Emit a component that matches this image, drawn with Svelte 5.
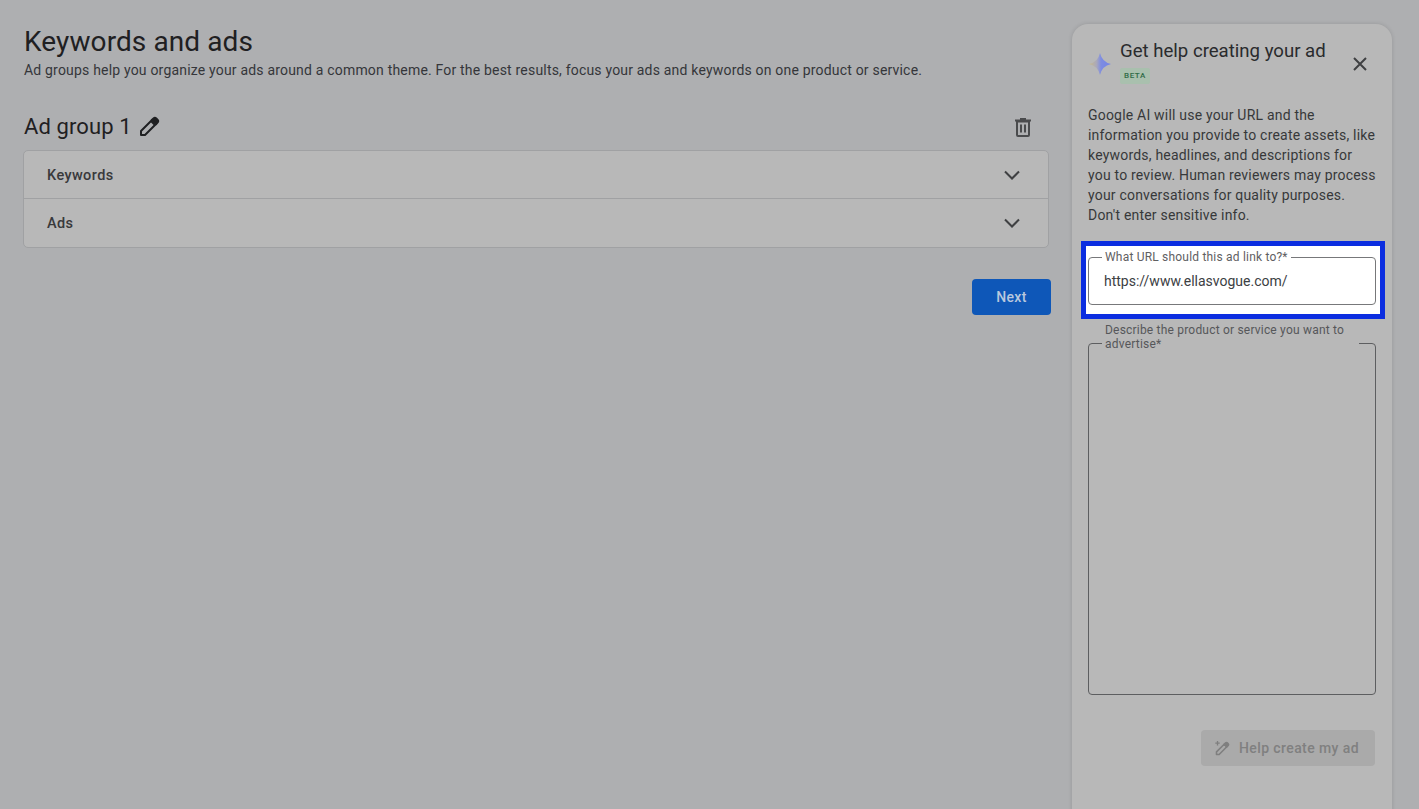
<script lang="ts">
  let url = 'https://www.ellasvogue.com/';
  let sections = ['Keywords', 'Ads'];
</script>

<div class="page">
  <main class="content">
    <h1>Keywords and ads</h1>
    <p class="lead">Ad groups help you organize your ads around a common theme. For the best results, focus your ads and keywords on one product or service.</p>

    <div class="group-head">
      <h2>Ad group 1</h2>
      <svg class="pencil" viewBox="0 0 24 24" width="24" height="24" fill="none" stroke="#1f2022" stroke-width="2">
        <path d="M4 20v-4L15.5 4.5l4 4L8 20z" stroke-linejoin="round" />
        <path d="M14 6l4 4" />
        <path d="M16.5 3.5a2 2 0 0 1 2.8 0l1.2 1.2a2 2 0 0 1 0 2.8L19 9l-4-4z" fill="#1f2022" />
      </svg>
      <svg class="trash" viewBox="0 0 24 24" width="24" height="24" fill="none" stroke="#4a4b4d" stroke-width="2">
        <path d="M6 6.5h12V20a1 1 0 0 1-1 1H7a1 1 0 0 1-1-1z" />
        <path d="M4 5.5h16M9 4h6" />
        <path d="M10 9.5v8M14 9.5v8" />
      </svg>
    </div>

    <div class="accordion">
      {#each sections as name}
        <div class="row">
          <span>{name}</span>
          <svg viewBox="0 0 24 24" width="24" height="24" fill="none" stroke="#3f4042" stroke-width="2">
            <path d="M5 8.5l7 7 7-7" />
          </svg>
        </div>
      {/each}
    </div>

    <div class="actions">
      <button class="next">Next</button>
    </div>
  </main>

  <aside class="panel">
    <header class="panel-head">
      <svg class="spark" viewBox="0 0 24 24" width="24" height="24">
        <defs>
          <linearGradient id="spark-fill" x1="0" y1="0" x2="1" y2="0">
            <stop offset="0" stop-color="#c8b98c" />
            <stop offset="0.35" stop-color="#a9a8bc" />
            <stop offset="0.55" stop-color="#7d8ce2" />
            <stop offset="1" stop-color="#7484e6" />
          </linearGradient>
        </defs>
        <path d="M12 1Q14 10 23 12Q14 14 12 23Q10 14 1 12Q10 10 12 1z" fill="url(#spark-fill)" />
      </svg>
      <div class="panel-title">
        <h3>Get help creating your ad</h3>
        <span class="beta">BETA</span>
      </div>
      <svg class="close" viewBox="0 0 24 24" width="24" height="24" fill="none" stroke="#3f4042" stroke-width="2">
        <path d="M6 6l12 12M18 6L6 18" />
      </svg>
    </header>

    <p class="intro">Google AI will use your URL and the information you provide to create assets, like keywords, headlines, and descriptions for you to review. Human reviewers may process your conversations for quality purposes. Don't enter sensitive info.</p>

    <div class="highlight">
      <fieldset class="field url">
        <legend>What URL should this ad link to?*</legend>
        <div class="value">{url}</div>
      </fieldset>
    </div>

    <fieldset class="field describe">
      <legend>Describe the product or service you want to advertise*</legend>
    </fieldset>

    <div class="panel-actions">
      <button class="help" disabled>
        <svg viewBox="0 0 18 18" width="18" height="18" fill="none" stroke="#7f7f7f" stroke-width="1.6">
          <path d="M3.5 15.5v-2.6l7.7-7.7 2.6 2.6-7.7 7.7z" stroke-linejoin="round" />
          <path d="M11.2 5.2l1.4-1.4a1.2 1.2 0 0 1 1.7 0l.9.9a1.2 1.2 0 0 1 0 1.7l-1.4 1.4z" fill="#7f7f7f" />
          <path d="M4.5 2v4.4M2.3 4.2h4.4" stroke-width="1.3" />
        </svg>
        Help create my ad
      </button>
    </div>
  </aside>
</div>

<style>
  :global(body) {
    margin: 0;
    background: #aeafb1;
    font-family: Roboto, "Liberation Sans", sans-serif;
    overflow: hidden;
  }

  .page {
    display: flex;
    height: 809px;
    overflow: hidden;
  }

  .content {
    width: 1026px;
    padding: 24px 0 0 23px;
    flex: none;
  }

  h1 {
    margin: 0 0 1px 1px;
    font-size: 28px;
    line-height: 35px;
    font-weight: 400;
    letter-spacing: 0.1px;
    color: #1f2022;
  }

  .lead {
    margin: 0 0 0 1px;
    font-size: 14px;
    line-height: 20px;
    letter-spacing: 0.19px;
    color: #35363a;
    white-space: nowrap;
  }

  .group-head {
    display: flex;
    align-items: center;
    margin-top: 33px;
    height: 27px;
    gap: 5px;
  }

  h2 {
    margin: 0 0 0 1px;
    font-size: 22px;
    font-weight: 400;
    line-height: 27px;
    letter-spacing: 0.1px;
    color: #1f2022;
  }

  .trash { margin-left: auto; margin-right: 14px; }

  .accordion {
    margin-top: 10px;
    background: #b8b8b8;
    border: 1px solid #a0a1a3;
    border-radius: 5px;
  }

  .row {
    display: flex;
    align-items: center;
    justify-content: space-between;
    height: 47px;
    padding: 0 24px 0 23px;
    font-size: 14.5px;
    font-weight: 500;
    letter-spacing: 0.4px;
    color: #38393b;
  }

  .row:first-child span { padding-top: 2px; }

  .row + .row { border-top: 1px solid #a0a1a3; height: 48px; }

  .actions {
    display: flex;
    justify-content: flex-end;
    margin: 31px -2px 0 0;
  }

  .next {
    width: 79px;
    height: 36px;
    border: none;
    border-radius: 4px;
    background: #0e57b8;
    color: #b9c8de;
    font: 500 14px Roboto, sans-serif;
    letter-spacing: 0.3px;
  }

  .panel {
    margin: 24px 0 0 23px;
    width: 320px;
    height: 800px;
    flex: none;
    box-sizing: border-box;
    padding: 15px 16px 0;
    background: #b8b8b8;
    border-radius: 16px 16px 0 0;
    box-shadow: 0 0 4px rgba(0, 0, 0, 0.14);
  }

  .panel-head {
    display: flex;
    align-items: flex-start;
  }

  .spark { margin: 13px 8px 0 0; flex: none; }

  .panel-title { flex: 1; }

  h3 {
    margin: 0;
    font-size: 18.6px;
    line-height: 24px;
    font-weight: 400;
    color: #2a2b2d;
    white-space: nowrap;
  }

  .beta {
    display: inline-block;
    margin-top: 5px;
    padding: 0 4px;
    background: #a9c0ae;
    border-radius: 2px;
    font-size: 8px;
    line-height: 16px;
    font-weight: 500;
    letter-spacing: 0.6px;
    color: #2f6b46;
    vertical-align: top;
  }

  .close { margin: 13px 4px 0 0; flex: none; }

  .intro {
    margin: 21px 0 0;
    font-size: 14px;
    line-height: 20px;
    letter-spacing: 0.2px;
    color: #37383a;
  }

  .highlight {
    margin: 16px 0 0 -7px;
    border: 5px solid #0b2de0;
    box-sizing: border-box;
    width: 304px;
    height: 78px;
    background: #fff;
    overflow: hidden;
  }

  .field {
    margin: 0;
    padding: 0 15px;
    border: 1px solid #5d5e60;
    border-radius: 4px;
    min-width: 0;
    box-sizing: border-box;
  }

  .field legend {
    padding: 0 3px;
    margin-left: -2px;
    font-size: 12px;
    line-height: 14px;
    letter-spacing: 0.2px;
    color: #5f6062;
  }

  .url {
    margin: 4px 4px 0 2px;
    height: 55px;
    border-color: #77787a;
    background: #fff;
  }

  .value {
    font-size: 14px;
    line-height: 20px;
    color: #3c4043;
    margin-top: 7px;
  }

  .describe {
    margin-top: 4px;
    height: 372px;
  }

  .describe legend {
    width: 251px;
    padding-bottom: 12px;
    color: #56575a;
  }

  .panel-actions {
    display: flex;
    justify-content: flex-end;
    margin: 35px 1px 0 0;
  }

  .help {
    display: flex;
    align-items: center;
    gap: 8px;
    width: 174px;
    height: 36px;
    padding: 0 0 0 12px;
    border: none;
    border-radius: 4px;
    background: #aaaaaa;
    color: #808080;
    font: 500 14px Roboto, sans-serif;
    letter-spacing: 0.4px;
  }
</style>
